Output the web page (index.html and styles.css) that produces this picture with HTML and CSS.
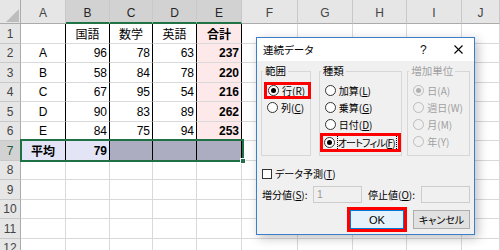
FILE: index.html
```html
<!DOCTYPE html>
<html lang="ja">
<head>
<meta charset="utf-8">
<title>連続データ</title>
<link rel="stylesheet" href="styles.css">
</head>
<body>
<div class="screen">
  <div class="sheet">
    <div class="corner"></div>
    <div class="c h">A</div><div class="c h sel">B</div><div class="c h sel">C</div><div class="c h sel">D</div><div class="c h sel">E</div><div class="c h">F</div><div class="c h">G</div><div class="c h">H</div><div class="c h">I</div><div class="c h">J</div>

    <div class="c rh">1</div>
    <div class="c t"></div><div class="c t ctr">国語</div><div class="c t ctr">数学</div><div class="c t ctr">英語</div><div class="c t tot ctr">合計</div><div class="c"></div><div class="c"></div><div class="c"></div><div class="c"></div><div class="c"></div>

    <div class="c rh">2</div>
    <div class="c t ctr">A</div><div class="c t num">96</div><div class="c t num">78</div><div class="c t num">63</div><div class="c t tot num">237</div><div class="c"></div><div class="c"></div><div class="c"></div><div class="c"></div><div class="c"></div>

    <div class="c rh">3</div>
    <div class="c t ctr">B</div><div class="c t num">58</div><div class="c t num">84</div><div class="c t num">78</div><div class="c t tot num">220</div><div class="c"></div><div class="c"></div><div class="c"></div><div class="c"></div><div class="c"></div>

    <div class="c rh">4</div>
    <div class="c t ctr">C</div><div class="c t num">67</div><div class="c t num">95</div><div class="c t num">54</div><div class="c t tot num">216</div><div class="c"></div><div class="c"></div><div class="c"></div><div class="c"></div><div class="c"></div>

    <div class="c rh">5</div>
    <div class="c t ctr">D</div><div class="c t num">90</div><div class="c t num">83</div><div class="c t num">89</div><div class="c t tot num">262</div><div class="c"></div><div class="c"></div><div class="c"></div><div class="c"></div><div class="c"></div>

    <div class="c rh">6</div>
    <div class="c t ctr">E</div><div class="c t num">84</div><div class="c t num">75</div><div class="c t num">94</div><div class="c t tot num">253</div><div class="c"></div><div class="c"></div><div class="c"></div><div class="c"></div><div class="c"></div>

    <div class="c rh sel">7</div>
    <div class="c t avg ctr">平均</div><div class="c t avg num">79</div><div class="c t dark"></div><div class="c t dark"></div><div class="c t dark"></div><div class="c"></div><div class="c"></div><div class="c"></div><div class="c"></div><div class="c"></div>

    <div class="c rh">8</div>
    <div class="c"></div><div class="c"></div><div class="c"></div><div class="c"></div><div class="c"></div><div class="c"></div><div class="c"></div><div class="c"></div><div class="c"></div><div class="c"></div>

    <div class="c rh">9</div>
    <div class="c"></div><div class="c"></div><div class="c"></div><div class="c"></div><div class="c"></div><div class="c"></div><div class="c"></div><div class="c"></div><div class="c"></div><div class="c"></div>

    <div class="c rh">10</div>
    <div class="c"></div><div class="c"></div><div class="c"></div><div class="c"></div><div class="c"></div><div class="c"></div><div class="c"></div><div class="c"></div><div class="c"></div><div class="c"></div>

    <div class="c rh">11</div>
    <div class="c"></div><div class="c"></div><div class="c"></div><div class="c"></div><div class="c"></div><div class="c"></div><div class="c"></div><div class="c"></div><div class="c"></div><div class="c"></div>

    <div class="c rh">12</div>
    <div class="c"></div><div class="c"></div><div class="c"></div><div class="c"></div><div class="c"></div><div class="c"></div><div class="c"></div><div class="c"></div><div class="c"></div><div class="c"></div>
  </div>

  <div class="selection"></div>
  <div class="handle"></div>

  <div class="dialog">
    <div class="titlebar">
      <span class="title">連続データ</span>
      <span class="help">?</span>
      <span class="close"><svg width="9" height="9" viewBox="0 0 9 9"><path d="M0.5 0.5 L8.5 8.5 M8.5 0.5 L0.5 8.5" stroke="#000" stroke-width="1.1" fill="none"/></svg></span>
    </div>
    <div class="dbody">
      <div class="groups">
        <fieldset class="grp g1">
          <legend>範囲</legend>
          <div class="opt mark"><span class="radio on"></span><span>行(<u>R</u>)</span></div>
          <div class="opt"><span class="radio"></span><span>列(<u>C</u>)</span></div>
        </fieldset>
        <fieldset class="grp g2">
          <legend>種類</legend>
          <div class="opt"><span class="radio"></span><span>加算(<u>L</u>)</span></div>
          <div class="opt"><span class="radio"></span><span>乗算(<u>G</u>)</span></div>
          <div class="opt"><span class="radio"></span><span>日付(<u>D</u>)</span></div>
          <div class="opt mark wide"><span class="radio on"></span><span class="focus">オートフィル(<u>F</u>)</span></div>
        </fieldset>
        <fieldset class="grp g3 off">
          <legend>増加単位</legend>
          <div class="opt"><span class="radio on"></span><span>日(A)</span></div>
          <div class="opt"><span class="radio"></span><span>週日(W)</span></div>
          <div class="opt"><span class="radio"></span><span>月(M)</span></div>
          <div class="opt"><span class="radio"></span><span>年(Y)</span></div>
        </fieldset>
      </div>
      <div class="check"><span class="box"></span><span>データ予測(<u>T</u>)</span></div>
      <div class="fields">
        <span class="flabel l1">増分値(<u>S</u>):</span>
        <span class="input">1</span>
        <span class="flabel l2">停止値(<u>O</u>):</span>
        <span class="input"></span>
      </div>
      <div class="buttons">
        <span class="btn ok">OK</span>
        <span class="btn cancel">キャンセル</span>
      </div>
    </div>
  </div>
</div>
</body>
</html>
```

FILE: styles.css
```css
* { box-sizing: border-box; }

html, body {
  margin: 0;
  padding: 0;
  background: #ffffff;
}

body {
  width: 500px;
  height: 250px;
  overflow: hidden;
  font-family: "Liberation Sans", "Noto Sans CJK JP", sans-serif;
  color: #000;
}

.screen {
  position: relative;
  width: 500px;
  height: 250px;
  overflow: hidden;
}

/* ---------- spreadsheet ---------- */
.sheet {
  display: grid;
  grid-template-columns: 21px 45px 44px 43px 44px 45px 56px 55px 54px 55px 38px;
  grid-template-rows: 24px repeat(6, 20px 19px);
  font-size: 12px;
}

.c {
  display: flex;
  align-items: center;
  padding: 0 2px;
  white-space: nowrap;
  overflow: hidden;
  border-right: 1px solid #d9d9d9;
  border-bottom: 1px solid #d9d9d9;
}

.corner {
  background: #e6e6e6;
  border-right: 1px solid #ababab;
  border-bottom: 1px solid #ababab;
  display: flex;
  justify-content: flex-end;
  align-items: flex-end;
  padding: 0 1px 1px 0;
}
.corner::after {
  content: "";
  width: 0;
  height: 0;
  border-left: 13px solid transparent;
  border-bottom: 13px solid #bdbdbd;
}

.h {
  background: #e6e6e6;
  color: #444;
  justify-content: center;
  align-items: flex-end;
  padding-bottom: 3px;
  border-right: 1px solid #c8c8c8;
  border-bottom: 1px solid #ababab;
}
.h.sel {
  background: #d2d2d2;
  color: #262626;
  border-bottom: 2px solid #217346;
  padding-bottom: 2px;
}

.rh {
  background: #e6e6e6;
  color: #444;
  justify-content: center;
  padding: 0;
  border-right: 1px solid #ababab;
  border-bottom: 1px solid #c8c8c8;
}
.rh.sel {
  background: #d2d2d2;
  color: #1e5a36;
}

.t { border-right-color: #000; }
.ctr { justify-content: center; }
.num { justify-content: flex-end; }
.tot { background: #fde9e9; font-weight: bold; }
.avg { background: #e4e4f7; font-weight: bold; }
.dark { background: #adadc2; }

.selection {
  position: absolute;
  left: 20px;
  top: 139px;
  width: 224px;
  height: 23px;
  border: 2px solid #1e7145;
}
.handle {
  position: absolute;
  left: 240px;
  top: 158px;
  width: 6px;
  height: 6px;
  background: #1e7145;
  border: 1px solid #fff;
}

/* ---------- dialog ---------- */
.dialog {
  position: absolute;
  left: 256px;
  top: 37px;
  width: 219px;
  height: 198px;
  border: 1px solid #3b7fc9;
  background: #f0f0f0;
  box-shadow: 3px 3px 10px rgba(0, 0, 0, 0.25);
  font-family: "Noto Sans CJK JP", sans-serif;
  font-size: 10px;
  font-feature-settings: "palt";
  display: flex;
  flex-direction: column;
}

.titlebar {
  height: 23px;
  background: #ffffff;
  display: flex;
  align-items: center;
  padding-left: 6px;
  font-size: 10.5px;
}
.title { flex: 1; }
.help {
  width: 34px;
  font-family: "Liberation Sans", sans-serif;
  font-size: 12px;
  color: #111;
}
.close {
  width: 20px;
  display: flex;
  align-items: center;
}

.dbody {
  flex: 1;
  display: flex;
  flex-direction: column;
  padding: 3px 4px 0 4px;
}

.groups {
  display: flex;
  align-items: stretch;
}

.grp {
  margin: 0;
  padding: 4px 1px 3px 1px;
  border: 1px solid #d7d7d7;
  min-width: 0;
  display: flex;
  flex-direction: column;
}
.grp legend {
  padding: 0 2px;
  margin-left: 0;
  line-height: 14px;
  font-size: 10.5px;
}
.g1 { width: 50px; }
.g2 { width: 84px; margin-left: 8px; }
.g3 { width: 63px; margin-left: 5px; }

.opt {
  height: 17px;
  display: flex;
  align-items: center;
  gap: 3px;
  padding: 0 4px 0 4px;
  white-space: nowrap;
  align-self: flex-start;
}
.opt.mark {
  outline: 3px solid #ff0000;
  outline-offset: -3px;
  padding-right: 5px;
}
.g1 .opt.mark { margin-left: 1px; padding-right: 6px; }
.opt.wide { height: 19px; margin-left: -1px; }

.radio {
  width: 11px;
  height: 11px;
  border: 1px solid #333;
  border-radius: 50%;
  background: #fff;
  display: flex;
  align-items: center;
  justify-content: center;
  flex: none;
}
.radio.on::after {
  content: "";
  width: 5px;
  height: 5px;
  border-radius: 50%;
  background: #000;
}

.focus {
  outline: 1px dotted #000;
  outline-offset: 0;
  padding-right: 1px;
  letter-spacing: -0.8px;
}

.off { color: #a0a0a0; }
.off .radio { border-color: #bcbcbc; background: #f0f0f0; }
.off .radio.on::after { background: #b0b0b0; }

.check {
  display: flex;
  align-items: center;
  gap: 3px;
  margin-top: 10px;
  padding-left: 1px;
  height: 15px;
}
.box {
  width: 10px;
  height: 10px;
  border: 1px solid #333;
  background: #fff;
}

.fields {
  display: flex;
  align-items: center;
  margin-top: 5px;
  height: 17px;
}
.flabel { white-space: nowrap; }
.l1 { width: 52px; padding-left: 1px; }
.l2 { width: 53px; margin-left: 6px; }
.input {
  width: 49px;
  height: 17px;
  border: 1px solid #cccccc;
  background: #f0f0f0;
  color: #9a9a9a;
  padding-left: 3px;
  line-height: 15px;
  font-family: "Liberation Sans", sans-serif;
  font-size: 10.5px;
}

.buttons {
  display: flex;
  justify-content: flex-end;
  align-items: center;
  gap: 9px;
  margin-top: 7px;
}
.btn {
  height: 19px;
  display: flex;
  align-items: center;
  justify-content: center;
  border: 1px solid #adadad;
  background: #e1e1e1;
}
.ok {
  width: 54px;
  border-color: #0078d7;
  background: #e5f1fb;
  outline: 3px solid #ff0000;
  outline-offset: 0;
  font-family: "Liberation Sans", sans-serif;
  font-size: 11px;
}
.cancel { width: 57px; }
```
